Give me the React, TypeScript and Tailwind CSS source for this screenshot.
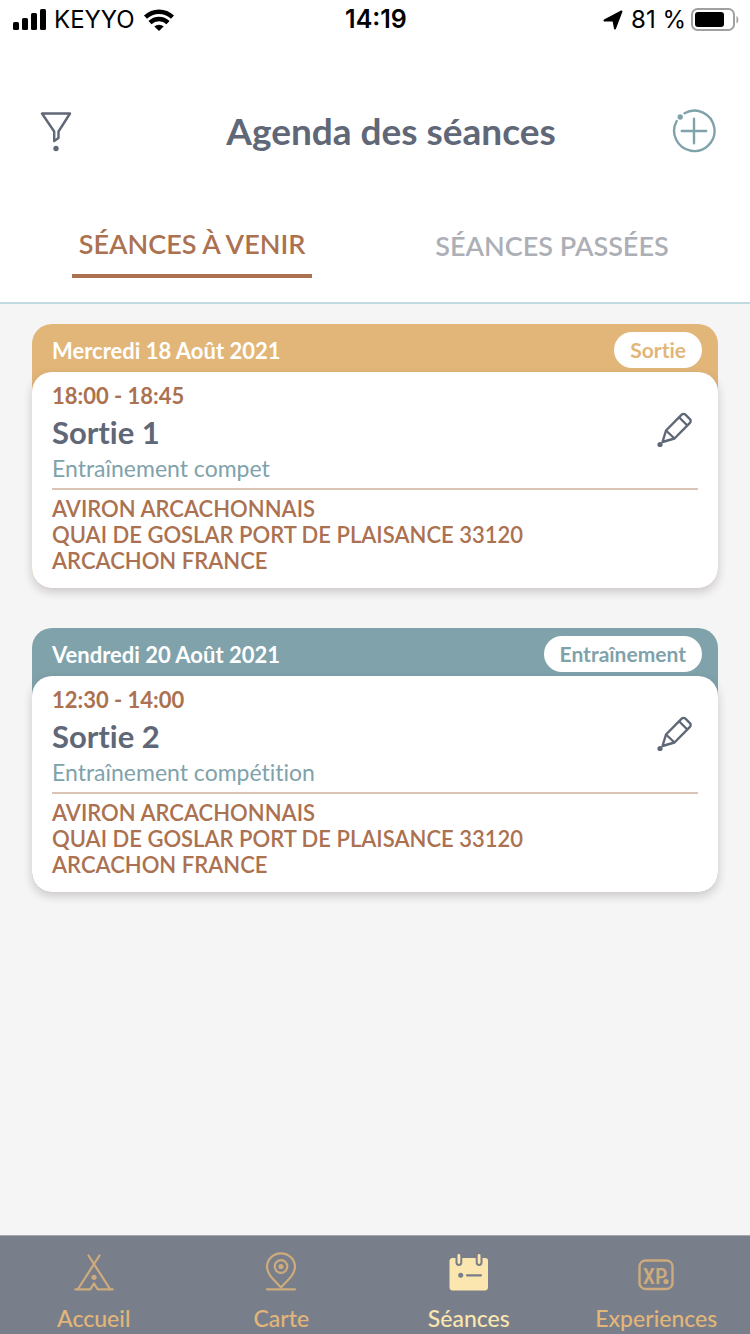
import React from "react";
import { clsx } from "clsx";

type Session = {
  date: string;
  kind: string;
  time: string;
  title: string;
  description: string;
  tone: "sand" | "teal";
};

const sessions: Session[] = [
  {
    date: "Mercredi 18 Août 2021",
    kind: "Sortie",
    time: "18:00 - 18:45",
    title: "Sortie 1",
    description: "Entraînement compet",
    tone: "sand",
  },
  {
    date: "Vendredi 20 Août 2021",
    kind: "Entraînement",
    time: "12:30 - 14:00",
    title: "Sortie 2",
    description: "Entraînement compétition",
    tone: "teal",
  },
];

const StatusBar = () => (
  <div className="grid h-10 grid-cols-3 items-center pl-3 pr-2.5 font-['Inter',sans-serif] text-2xl text-black">
    <div className="flex items-center gap-2">
      <svg width="34" height="22" viewBox="0 0 34 22" aria-hidden="true">
        <rect x="1" y="13" width="6" height="8" rx="1.5" />
        <rect x="10" y="9" width="6" height="12" rx="1.5" />
        <rect x="19" y="4" width="6" height="17" rx="1.5" />
        <rect x="28" y="0" width="6" height="21" rx="1.5" />
      </svg>
      <span>KEYYO</span>
      <svg width="32" height="24" viewBox="0 0 32 24" aria-hidden="true">
        <g fill="none" stroke="#000" strokeWidth="4.4">
          <path d="M2.500 9.200a19.500 19.500 0 0 1 27 0" />
          <path d="M7 14.600a13 13 0 0 1 18 0" />
        </g>
        <path d="M11.300 18.500a7 7 0 0 1 9.400 0L16 23z" />
      </svg>
    </div>
    <span className="text-center text-[25px] font-semibold">14:19</span>
    <div className="flex items-center justify-end gap-1">
      <svg width="20" height="20" viewBox="0 0 20 20" aria-hidden="true">
        <path
          d="M1.500 10.500 18.500 1.500l-6.500 17-1.500-8z"
          stroke="#000"
          strokeWidth="2"
          strokeLinejoin="round"
        />
      </svg>
      <span className="ml-1 whitespace-nowrap">81 %</span>
      <svg width="50" height="24" viewBox="0 0 50 24" aria-hidden="true">
        <rect x="2" y="1" width="42" height="21" rx="5.5" fill="none" stroke="#a0a0a0" strokeWidth="2" />
        <rect x="5" y="4" width="29" height="15" rx="3" />
        <path d="M46.500 8c2.400 1 2.400 6.500 0 7.500z" fill="#a0a0a0" />
      </svg>
    </div>
  </div>
);

const FilterIcon = () => (
  <svg width="32" height="42" viewBox="0 0 32 42" fill="none" stroke="currentColor" strokeWidth="2.4" strokeLinejoin="round" aria-hidden="true">
    <path d="M2 3.500h28L18.500 21.500v6.500l-4.300 3V21.500z" />
    <circle cx="16" cy="38.500" r="2.700" fill="currentColor" stroke="none" />
  </svg>
);

const AddIcon = () => (
  <svg width="44" height="44" viewBox="0 0 44 44" fill="none" stroke="currentColor" strokeWidth="2.4" strokeLinecap="round" aria-hidden="true">
    <path d="M12.500 4.200A20.200 20.200 0 1 1 4.700 12" />
    <path d="M22 9.800v24.400M9.800 22h24.400" />
    <circle cx="8.200" cy="8" r="2.700" fill="currentColor" stroke="none" />
  </svg>
);

const PencilIcon = () => (
  <svg width="36" height="36" viewBox="0 0 36 36" fill="none" stroke="currentColor" strokeWidth="2.4" strokeLinejoin="round" aria-hidden="true">
    <path d="M9 18.500 24.700 2.600a2.600 2.600 0 0 1 3.700 0l4.500 4.500a2.600 2.600 0 0 1 0 3.700L17.500 26.500 5.500 30z" />
    <path d="m9 18.500 8.500 8M22.300 5.500l8 8" />
    <circle cx="3" cy="32.500" r="2.600" fill="currentColor" stroke="none" />
  </svg>
);

const TentIcon = () => (
  <svg width="40" height="40" viewBox="0 0 40 40" fill="none" stroke="currentColor" strokeWidth="2.2" strokeLinecap="round" strokeLinejoin="round" aria-hidden="true">
    <path d="M14.500 3.500 36 37M25.500 3.500 4 37" />
    <path d="M1.200 37.300h15.100L20 31.500l3.700 5.800h15.100" />
    <circle cx="20" cy="25.300" r="2.600" fill="currentColor" stroke="none" />
  </svg>
);

const PinIcon = () => (
  <svg width="40" height="40" viewBox="0 0 40 40" fill="none" stroke="currentColor" strokeWidth="2.2" strokeLinecap="round" strokeLinejoin="round" aria-hidden="true">
    <path d="M20 35.500C14 28.500 6 22.500 6 14.800a14 13.500 0 0 1 28 0C34 22.500 26 28.500 20 35.500z" />
    <circle cx="20" cy="14.500" r="6.300" />
    <circle cx="20" cy="14.500" r="2.600" fill="currentColor" stroke="none" />
    <path d="M6 37.300h28" />
  </svg>
);

const CalendarIcon = () => (
  <svg width="40" height="40" viewBox="0 0 40 40" aria-hidden="true">
    <path
      fill="currentColor"
      d="M3.500 6h3v4.500a3.400 3.400 0 0 0 6.800 0V6h13.400v4.500a3.400 3.400 0 0 0 6.800 0V6H36a3 3 0 0 1 3 3.300v26A3.300 3.300 0 0 1 36 38.600H3.500A3.300 3.300 0 0 1 .500 35.300v-26A3.300 3.300 0 0 1 3.500 6z"
    />
    <path d="M9.900 3.500v7M30.100 3.500v7" stroke="currentColor" strokeWidth="2.800" strokeLinecap="round" />
    <circle cx="11.700" cy="23.300" r="2.500" fill="#797f8a" />
    <path d="M18 23.300h14" stroke="#797f8a" strokeWidth="2.200" strokeLinecap="round" />
  </svg>
);

const XpIcon = () => (
  <svg width="40" height="40" viewBox="0 0 40 40" fill="none" aria-hidden="true">
    <rect x="3.500" y="8.500" width="33" height="28.500" rx="6" stroke="currentColor" strokeWidth="2.400" />
    <text x="19" y="32" textAnchor="middle" fill="currentColor" className="font-['Liberation_Sans_Narrow','Roboto_Condensed','Roboto',sans-serif] text-[22px] font-medium">
      XP
    </text>
    <circle cx="30" cy="29.500" r="2.600" fill="currentColor" />
  </svg>
);

const SessionCard = ({ session }: { session: Session }) => (
  <article
    className={clsx(
      "rounded-[20px]",
      session.tone === "sand" ? "bg-[#e2b679] text-[#e2b679]" : "bg-[#80a2ab] text-[#80a2ab]"
    )}
  >
    <div className="flex h-12 items-center justify-between pl-5 pr-4 pt-1">
      <h2 className="text-[22px] font-bold text-white">{session.date}</h2>
      <span className="rounded-full bg-white px-4 text-[21px] leading-9 font-bold">{session.kind}</span>
    </div>
    <div className="rounded-[20px] bg-white px-5 pt-2 pb-3.5 shadow-[0_4px_10px_rgba(60,40,50,0.22)]">
      <div className="flex items-center justify-between border-b-2 border-[#dbc3b6] pr-[5px] pb-1">
        <div>
          <p className="text-[22px] leading-8 font-bold text-[#ab7150]">{session.time}</p>
          <h3 className="text-[31px] leading-10 font-bold text-[#606777]">{session.title}</h3>
          <p className="text-[23px] leading-8 text-[#80a2ab]">{session.description}</p>
        </div>
        <button type="button" aria-label="Modifier la séance" className="pb-1 text-[#606777]">
          <PencilIcon />
        </button>
      </div>
      {/* Venue address */}
      <address className="max-w-[500px] pt-1.5 text-[22px] leading-[26px] font-semibold text-[#ab7150] not-italic">
        AVIRON ARCACHONNAIS
        <br />
        QUAI DE GOSLAR PORT DE PLAISANCE 33120 ARCACHON FRANCE
      </address>
    </div>
  </article>
);

const navItems = [
  { label: "Accueil", icon: <TentIcon /> },
  { label: "Carte", icon: <PinIcon /> },
  { label: "Séances", icon: <CalendarIcon />, active: true },
  { label: "Experiences", icon: <XpIcon /> },
];

const App = () => {
  return (
    <div className="flex min-h-screen flex-col bg-[#f5f5f5] font-['Lato',sans-serif] [font-variant-ligatures:no-common-ligatures]">
      <header className="border-b-2 border-[#bfdae1] bg-white">
        <StatusBar />
        <div className="flex items-center justify-between px-[34px] pt-[69px]">
          <button type="button" aria-label="Filtrer" className="flex w-11 justify-center text-[#606777]">
            <FilterIcon />
          </button>
          <h1 className="pl-8 text-[37px] leading-[44px] font-bold text-[#606777]">Agenda des séances</h1>
          <button type="button" aria-label="Ajouter une séance" className="text-[#80a2ab]">
            <AddIcon />
          </button>
        </div>
        <div role="tablist" className="grid grid-cols-2 pt-[57px] pr-[18px] pb-6 pl-3 text-[27px]">
          <button
            type="button"
            role="tab"
            aria-selected="true"
            className="w-60 justify-self-center border-b-4 border-[#ab7150] pt-2 pb-1 font-semibold leading-[52px] text-[#ab7150]"
          >
            SÉANCES À VENIR
          </button>
          <button
            type="button"
            role="tab"
            aria-selected="false"
            className="w-60 justify-self-center pt-2 pb-1 font-semibold leading-[52px] text-[#adafb6]"
          >
            SÉANCES PASSÉES
          </button>
        </div>
      </header>

      <main className="flex flex-1 flex-col gap-10 px-8 py-5">
        {sessions.map((session) => (
          <SessionCard key={session.date} session={session} />
        ))}
      </main>

      <nav className="grid grid-cols-4 border-t border-[#a3a8a8] bg-[#797f8a] pt-4 text-[23px] leading-8 font-medium">
        {navItems.map((item) => (
          <a
            key={item.label}
            href="#"
            aria-current={item.active ? "page" : undefined}
            className={clsx(
              "flex flex-col items-center gap-2.5",
              item.active ? "text-[#fbe6b0]" : "text-[#e2b679]"
            )}
          >
            <span className={item.active ? "" : "opacity-80"}>{item.icon}</span>
            <span>{item.label}</span>
          </a>
        ))}
      </nav>
    </div>
  );
};

export default App;
